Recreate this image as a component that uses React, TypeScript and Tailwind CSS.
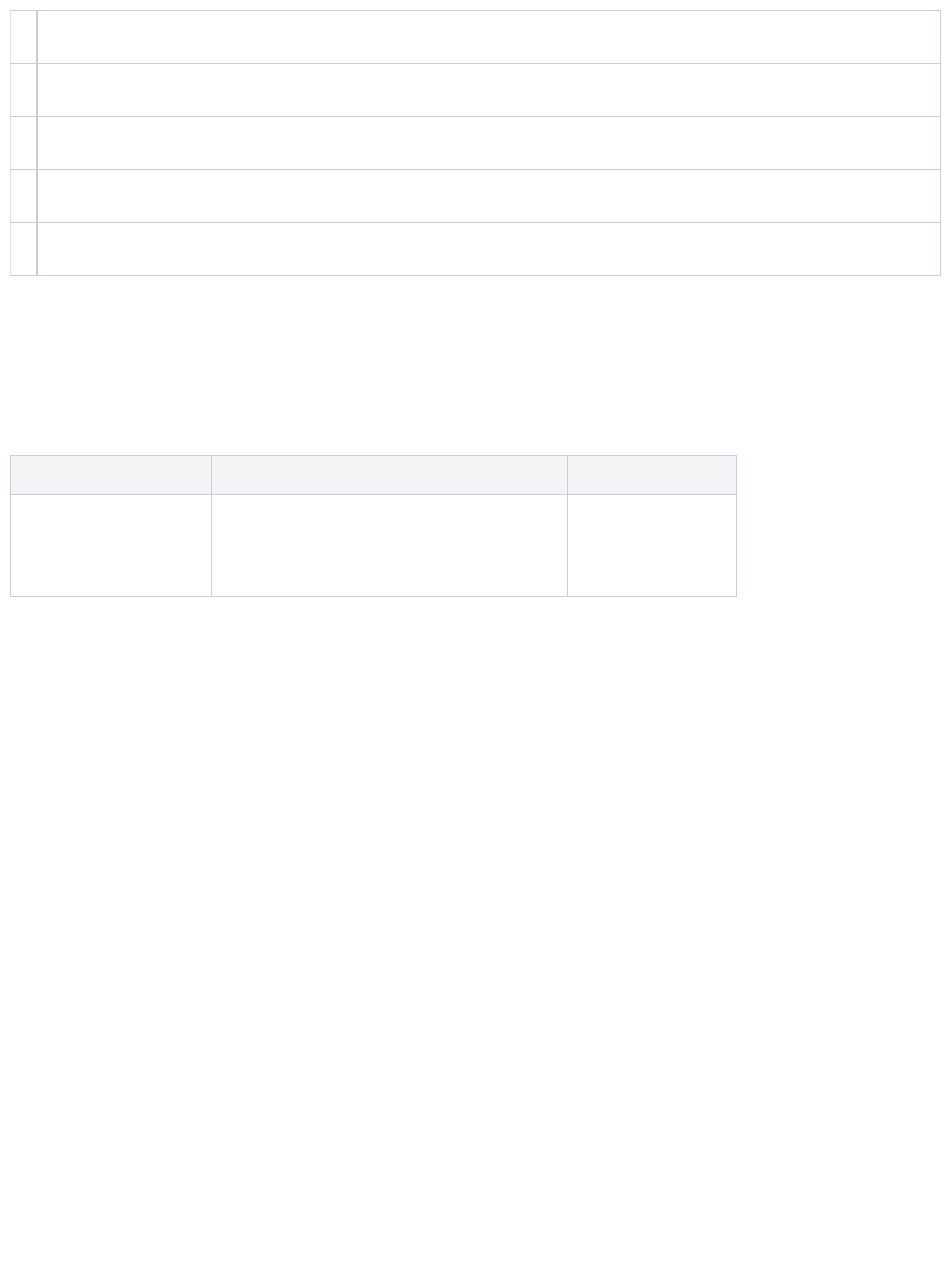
export default function App() {
  const rows = [1, 2, 3, 4, 5];

  return (
    <div className="min-h-screen bg-white p-[10px] font-['Liberation_Sans',sans-serif]">
      {/* numbered rows */}
      <table className="w-[931px] border-collapse">
        <tbody>
          {rows.map((r) => (
            <tr key={r}>
              <td className="h-[53px] w-[26px] border border-[#c9cdd5] border-l-[#dfe2e7] border-r-2 p-0"></td>
              <td className="h-[53px] border border-[#c9cdd5] p-0"></td>
            </tr>
          ))}
        </tbody>
      </table>

      {/* three column table */}
      <table className="mt-[179px] w-[727px] border-collapse">
        <thead>
          <tr className="bg-gray-100">
            <th className="h-[39px] w-[201px] border border-[#c9cdd5] p-0"></th>
            <th className="h-[39px] w-[356px] border border-[#c9cdd5] p-0"></th>
            <th className="h-[39px] border border-[#c9cdd5] p-0"></th>
          </tr>
        </thead>
        <tbody>
          <tr>
            <td className="h-[102px] border border-[#c9cdd5] p-0"></td>
            <td className="h-[102px] border border-[#c9cdd5] p-0"></td>
            <td className="h-[102px] border border-[#c9cdd5] p-0"></td>
          </tr>
        </tbody>
      </table>
    </div>
  );
}
